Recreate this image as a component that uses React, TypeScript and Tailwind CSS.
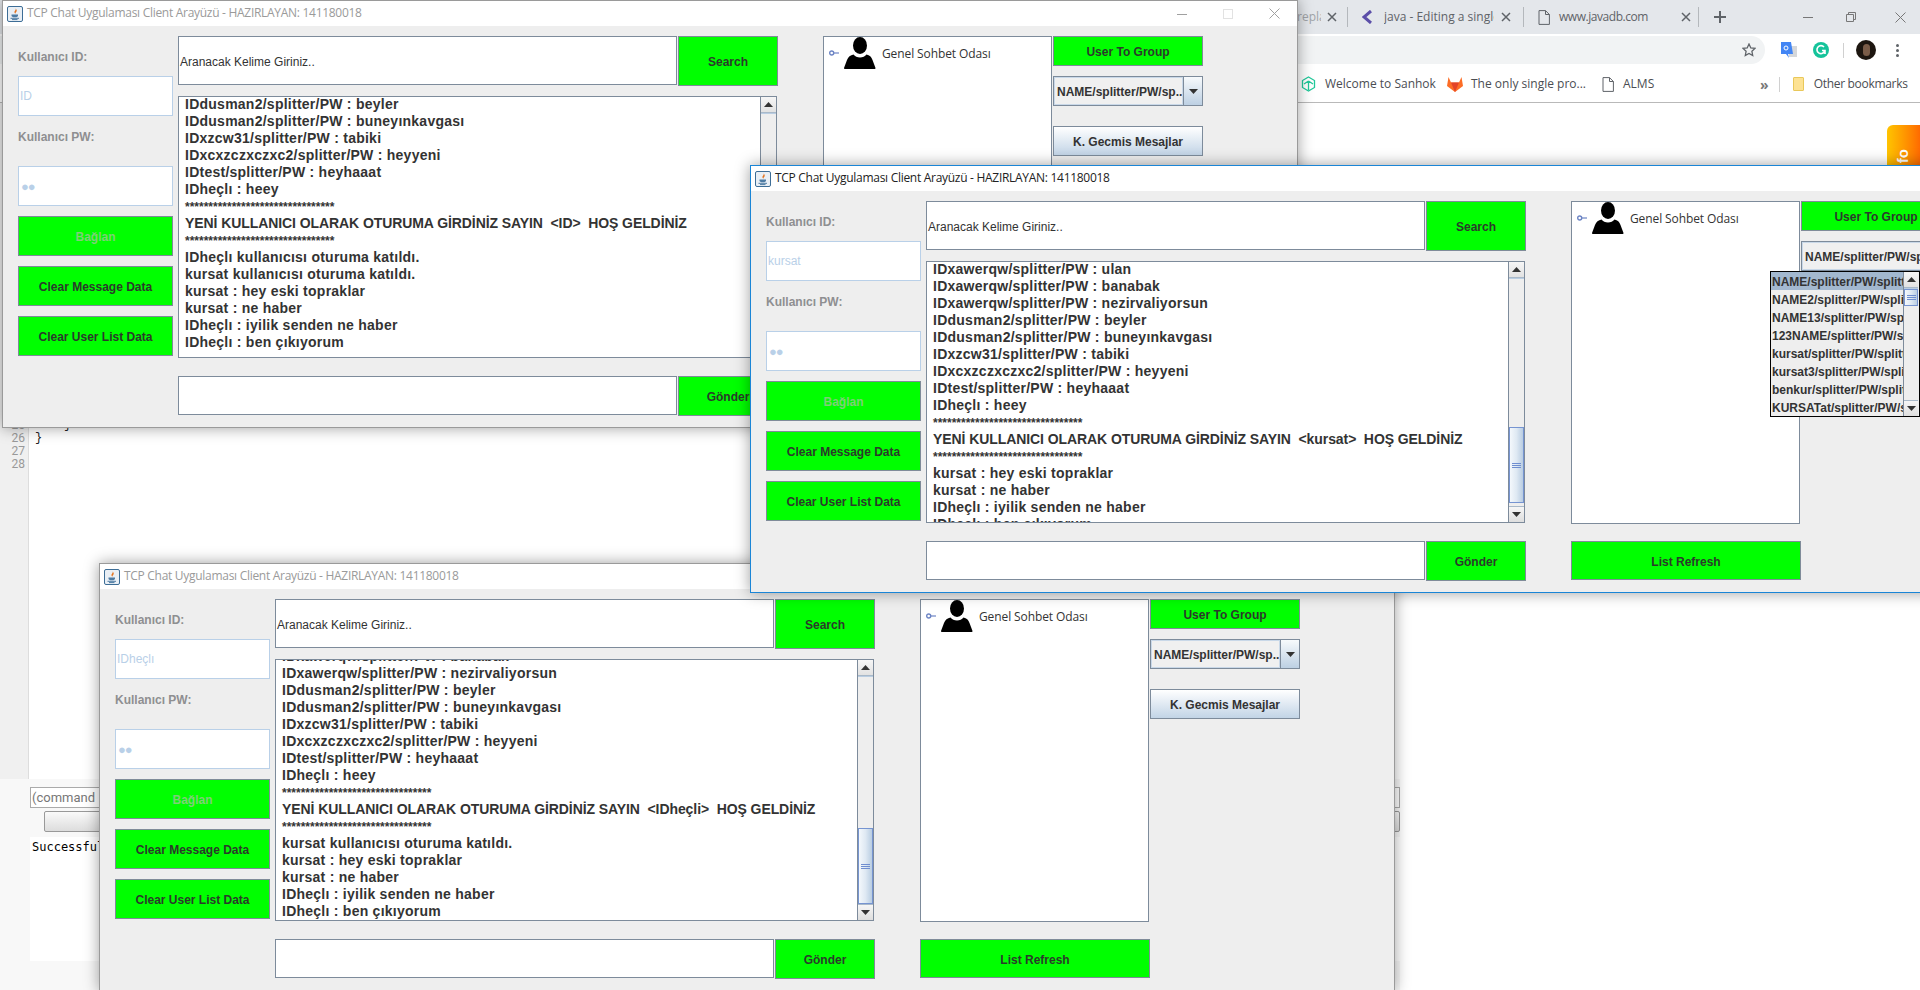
import React from "react";

const STARS = "********************************";
type Line = { k: "n" | "s" | "h"; t: string };
const n = (t: string): Line => ({ k: "n", t });
const s: Line = { k: "s", t: STARS };
const h = (name: string): Line => ({ k: "h", t: `YENİ KULLANICI OLARAK OTURUMA GİRDİNİZ SAYIN  <${name}>  HOŞ GELDİNİZ` });

const W1: Line[] = [
  n("IDdusman2/splitter/PW : beyler"), n("IDdusman2/splitter/PW : buneyınkavgası"), n("IDxzcw31/splitter/PW : tabiki"),
  n("IDxcxzczxczxc2/splitter/PW : heyyeni"), n("IDtest/splitter/PW : heyhaaat"), n("IDheçlı : heey"),
  s, h("ID"), s,
  n("IDheçlı kullanıcısı oturuma katıldı."), n("kursat kullanıcısı oturuma katıldı."), n("kursat : hey eski topraklar"),
  n("kursat : ne haber"), n("IDheçlı : iyilik senden ne haber"), n("IDheçlı : ben çıkıyorum"),
];
const W2: Line[] = [
  n("IDxawerqw/splitter/PW : ulan"), n("IDxawerqw/splitter/PW : banabak"), n("IDxawerqw/splitter/PW : nezirvaliyorsun"),
  n("IDdusman2/splitter/PW : beyler"), n("IDdusman2/splitter/PW : buneyınkavgası"), n("IDxzcw31/splitter/PW : tabiki"),
  n("IDxcxzczxczxc2/splitter/PW : heyyeni"), n("IDtest/splitter/PW : heyhaaat"), n("IDheçlı : heey"),
  s, h("kursat"), s,
  n("kursat : hey eski topraklar"), n("kursat : ne haber"), n("IDheçlı : iyilik senden ne haber"), n("IDheçlı : ben çıkıyorum"),
];
const W3: Line[] = [
  n("IDxawerqw/splitter/PW : banabak"), n("IDxawerqw/splitter/PW : nezirvaliyorsun"),
  n("IDdusman2/splitter/PW : beyler"), n("IDdusman2/splitter/PW : buneyınkavgası"), n("IDxzcw31/splitter/PW : tabiki"),
  n("IDxcxzczxczxc2/splitter/PW : heyyeni"), n("IDtest/splitter/PW : heyhaaat"), n("IDheçlı : heey"),
  s, h("IDheçli"), s,
  n("kursat kullanıcısı oturuma katıldı."), n("kursat : hey eski topraklar"), n("kursat : ne haber"),
  n("IDheçlı : iyilik senden ne haber"), n("IDheçlı : ben çıkıyorum"),
];

const POPUP = [
  "NAME/splitter/PW/splitter", "NAME2/splitter/PW/splitter", "NAME13/splitter/PW/splitter", "123NAME/splitter/PW/splitter",
  "kursat/splitter/PW/splitter", "kursat3/splitter/PW/splitter", "benkur/splitter/PW/splitter", "KURSATat/splitter/PW/splitter",
];

function JavaIcon() {
  return (
    <svg width="16" height="16" viewBox="0 0 16 16" className="shrink-0">
      <rect x="0.5" y="0.5" width="15" height="15" rx="1.5" fill="#e9eff5" stroke="#3d6d96" />
      <path d="M8.5 2.5c1 1.5-1.5 2.5-1 4 .2.6.6 1 1 1.2-.5-1.2 2-2.2 1-4-.2-.5-.5-.9-1-1.2z" fill="#e2711d" />
      <path d="M4.5 8.5h6.5v1.2c0 .9-1 1.5-3.2 1.5s-3.3-.6-3.3-1.5z" fill="#4d7ba3" />
      <path d="M3.5 12.3h8.5M5 13.6h5.5" stroke="#4d7ba3" strokeWidth="1" />
    </svg>
  );
}

function TitleControls({ active }: { active: boolean }) {
  const c = active ? "#111111" : "#a0a0a0";
  return (
    <div className="flex h-full shrink-0">
      <div className="flex h-full w-[46px] items-center justify-center">
        <svg width="10" height="10" viewBox="0 0 10 10"><path d="M0 5.5h10" stroke={c} /></svg>
      </div>
      <div className="flex h-full w-[46px] items-center justify-center">
        <svg width="10" height="10" viewBox="0 0 10 10"><rect x="0.5" y="0.5" width="9" height="9" fill="none" stroke="#e2e2e2" /></svg>
      </div>
      <div className="flex h-full w-[46px] items-center justify-center">
        <svg width="11" height="11" viewBox="0 0 11 11"><path d="M0.5 0.5l10 10M10.5 0.5l-10 10" stroke={c} /></svg>
      </div>
    </div>
  );
}

function Arrow({ up }: { up?: boolean }) {
  return (
    <svg width="9" height="5" viewBox="0 0 9 5">
      <path d={up ? "M4.5 0L9 5H0z" : "M0 0h9L4.5 5z"} fill="#333333" />
    </svg>
  );
}

function Scrollbar({ thumb, thumbH, w }: { thumb: string; thumbH: string; w: string }) {
  return (
    <div className={`flex h-full shrink-0 flex-col border-l border-[#7d8b9b] bg-[#eeeeee] ${w}`}>
      <div className="flex h-[16px] shrink-0 items-center justify-center border-b border-[#a9b9c9] bg-gradient-to-b from-[#f6f6f6] to-[#e2e2e2]">
        <Arrow up />
      </div>
      <div className="min-h-0 flex-1 border-t border-[#b9cde2]">
        <div className={`flex flex-col items-center justify-center gap-[1px] border-y border-x border-[#7694d1] bg-gradient-to-r from-[#f4f8fc] via-[#dfe9f3] to-[#b9cde2] ${thumb} ${thumbH}`}>
          <div className="h-px w-[9px] bg-[#6f8ed0]" />
          <div className="h-px w-[9px] bg-[#6f8ed0]" />
          <div className="h-px w-[9px] bg-[#6f8ed0]" />
        </div>
      </div>
      <div className="flex h-[16px] shrink-0 items-center justify-center border-t border-[#a9b9c9] bg-gradient-to-b from-[#f6f6f6] to-[#dedede]">
        <Arrow />
      </div>
    </div>
  );
}

function GreenButton({ label, cls, disabled }: { label: string; cls: string; disabled?: boolean }) {
  return (
    <div className={`flex items-center justify-center border border-[#7f8b99] bg-[#00ff00] pt-[2px] text-[12px] font-bold ${disabled ? "text-[#7fcf78]" : "text-[#2b3a2b]"} ${cls}`}>
      {label}
    </div>
  );
}

function Person() {
  return (
    <svg width="32" height="32" viewBox="0 0 32 32" className="shrink-0">
      <ellipse cx="16" cy="8.5" rx="7" ry="8.5" fill="#000" />
      <path d="M9.5 17.5c1.5 1.8 3.8 3 6.5 3s5-1.2 6.500-3c3 .8 5 2.300 6 5.500l3 8c.2.6-.2 1-.8 1H.8c-.6 0-1-.4-.8-1l3-8c1-3.200 3.500-4.700 6.500-5.500z" fill="#000" />
    </svg>
  );
}

function Key() {
  return (
    <svg width="10" height="6" viewBox="0 0 10 6" className="shrink-0">
      <circle cx="2.7" cy="3" r="2" fill="none" stroke="#6c84c4" strokeWidth="1.4" />
      <path d="M5 3h5" stroke="#6c84c4" strokeWidth="1.2" />
    </svg>
  );
}

type WinProps = {
  pos: string;
  active?: boolean;
  lines: Line[];
  scroll: string;
  thumb: string;
  thumbH: string;
  id: string;
  popup?: boolean;
};

function Win({ pos, active, lines, scroll, thumb, thumbH, id, popup }: WinProps) {
  return (
    <div
      className={`absolute flex h-[428px] w-[1296px] flex-col border bg-[#eeeeee] font-['Liberation_Sans',Arial,sans-serif] shadow-[0_0_14px_rgba(0,0,0,0.38)] ${active ? "border-[#1a85d6]" : "border-[#9a9a9a]"} ${pos}`}
    >
      <div className="flex h-[25px] shrink-0 items-center bg-white">
        <div className="ml-[4px] flex min-w-0 flex-1 items-center gap-[4px]">
          <JavaIcon />
          <span className={`-mt-[2px] font-['Open_Sans',sans-serif] text-[12px] tracking-[-0.29px] whitespace-nowrap ${active ? "text-[#222222]" : "text-[#9a9a9a]"}`}>
            TCP Chat Uygulaması Client Arayüzü - HAZIRLAYAN: 141180018
          </span>
        </div>
        <TitleControls active={!!active} />
      </div>

      <div className="flex flex-1 pt-[10px] pl-[15px]">
        {/* left column */}
        <div className="flex w-[155px] shrink-0 flex-col">
          <div className="flex h-[40px] items-center pt-[2px] text-[12px] font-bold text-[#8e8f91]">Kullanıcı ID:</div>
          <div className="flex h-[40px] items-center border border-[#b9d0e8] bg-white pl-[1px] text-[12px] text-[#b9d0e8]">{id}</div>
          <div className="mb-[8px] flex h-[42px] items-center text-[12px] font-bold text-[#8e8f91]">Kullanıcı PW:</div>
          <div className="flex h-[40px] items-center border border-[#b9d0e8] bg-white pt-[2px] pl-[2px] text-[13px] tracking-[-1px] text-[#b9d0e8]">●●</div>
          <GreenButton label="Bağlan" disabled cls="mt-[10px] h-[40px]" />
          <GreenButton label="Clear Message Data" cls="mt-[10px] h-[40px]" />
          <GreenButton label="Clear User List Data" cls="mt-[10px] h-[40px]" />
        </div>

        {/* centre column */}
        <div className="ml-[5px] flex w-[600px] shrink-0 flex-col">
          <div className="flex h-[50px] gap-[1px]">
            <div className="flex h-[49px] w-[499px] items-center border border-[#7d8b9b] bg-white pt-[2px] pl-[1px] text-[12px] text-[#333333]">Aranacak Kelime Giriniz..</div>
            <GreenButton label="Search" cls="h-[50px] w-[100px]" />
          </div>
          <div className="mt-[10px] flex h-[262px] w-[599px] overflow-hidden border border-[#7d8b9b] bg-white">
            <div className="min-w-0 flex-1 overflow-hidden pl-[6px] whitespace-pre text-[#333333]">
              <div className={scroll}>
                {lines.map((l, i) =>
                  l.k === "s" ? (
                    <div key={i} className="mb-[6px] h-[11px] pt-[4px] text-[12px] leading-[11px] font-bold">{l.t}</div>
                  ) : (
                    <div key={i} className={`h-[17px] text-[14px] leading-[17px] font-bold ${l.k === "h" ? "tracking-[-0.08px]" : "tracking-[0.25px]"}`}>{l.t}</div>
                  ),
                )}
              </div>
            </div>
            <Scrollbar thumb={thumb} thumbH={thumbH} w="w-[16px]" />
          </div>
          <div className="mt-[18px] flex gap-[1px]">
            <div className="h-[39px] w-[499px] border border-[#7d8b9b] bg-white" />
            <GreenButton label="Gönder" cls="h-[40px] w-[100px]" />
          </div>
        </div>

        {/* tree column */}
        <div className="ml-[45px] flex w-[230px] shrink-0 flex-col">
          <div className="h-[323px] w-[229px] border border-[#7d8b9b] bg-white">
            <div className="flex items-center pl-[5px] text-[12px] text-[#333333]">
              <Key />
              <span className="ml-[5px]"><Person /></span>
              <span className="ml-[6px] pt-[2px] font-['Open_Sans',sans-serif] tracking-[-0.1px] whitespace-nowrap">Genel Sohbet Odası</span>
            </div>
          </div>
          <GreenButton label="List Refresh" cls="mt-[17px] h-[39px] w-[230px]" />
        </div>

        {/* right column */}
        <div className="flex w-[150px] shrink-0 flex-col">
          <GreenButton label="User To Group" cls="h-[30px]" />
          <div className="mt-[10px] flex h-[30px] border border-[#7d8b9b] text-[12px] font-bold text-[#333333]">
            <div className="flex min-w-0 flex-1 items-center overflow-hidden border border-[#c9d8e8] bg-[#f0f0f0] pt-[2px] pl-[2px] whitespace-nowrap">NAME/splitter/PW/sp...</div>
            <div className="flex w-[19px] shrink-0 items-center justify-center border-l border-[#7d8b9b] bg-gradient-to-b from-[#f7fafc] to-[#bdd0e3]">
              <Arrow />
            </div>
          </div>
          <div className="mt-[20px] flex h-[30px] items-center justify-center border border-[#7d8b9b] bg-gradient-to-b from-[#ffffff] to-[#c2d4e6] pt-[2px] text-[12px] font-bold text-[#333333]">K. Gecmis Mesajlar</div>
        </div>
      </div>

      {popup && (
        <div className="absolute top-[105px] left-[1019px] flex h-[146px] w-[150px] border border-black bg-[#eeeeee] font-bold text-[#333333]">
          <div className="w-[132px] shrink-0 overflow-hidden">
            {POPUP.map((p, i) => (
              <div key={p} className={`h-[18px] pl-[1px] text-[12px] leading-[20px] whitespace-nowrap ${i === 0 ? "bg-[#a3b8cf]" : ""}`}>{p}</div>
            ))}
          </div>
          <Scrollbar thumb="mt-0" thumbH="h-[17px]" w="w-[15px]" />
        </div>
      )}
    </div>
  );
}

function TabX() {
  return (
    <svg width="10" height="10" viewBox="0 0 10 10" className="shrink-0"><path d="M1 1l8 8M9 1L1 9" stroke="#5f6368" strokeWidth="1.5" /></svg>
  );
}

function FileIcon() {
  return (
    <svg width="12" height="15" viewBox="0 0 12 15" className="shrink-0"><path d="M1 .6h6.500L11.400 4.500V14.400H1zM7.500 .6V4.500H11.400" fill="none" stroke="#5f6368" /></svg>
  );
}

function Chrome() {
  return (
    <div className="font-['Open_Sans',sans-serif] text-[12px] text-[#5f6368]">
      {/* tab strip */}
      <div className="flex h-[34px] items-center bg-[#e4e7eb] pl-[1297px]">
        <div className="flex w-[50px] items-center">
          <span className="w-[24px] overflow-hidden whitespace-nowrap text-[#a0a4a8]">replace</span>
          <span className="ml-[6px]"><TabX /></span>
        </div>
        <div className="h-[20px] w-px bg-[#b4b8bc]" />
        <div className="flex w-[175px] items-center">
          <svg width="12" height="14" viewBox="0 0 12 14" className="ml-[14px] shrink-0"><path d="M9 1L2 7l7 6" fill="none" stroke="#5b4ea8" strokeWidth="3" /></svg>
          <span className="ml-[10px] w-[110px] overflow-hidden whitespace-nowrap">java - Editing a single</span>
          <span className="ml-[7px]"><TabX /></span>
        </div>
        <div className="h-[20px] w-px bg-[#b4b8bc]" />
        <div className="flex w-[174px] items-center">
          <span className="ml-[14px]"><FileIcon /></span>
          <span className="ml-[9px] w-[122px] tracking-[-0.45px] whitespace-nowrap">www.javadb.com</span>
          <span className="ml-[0px]"><TabX /></span>
        </div>
        <div className="h-[20px] w-px bg-[#b4b8bc]" />
        <svg width="12" height="12" viewBox="0 0 12 12" className="ml-[15px] shrink-0"><path d="M6 0v12M0 6h12" stroke="#5f6368" strokeWidth="2" /></svg>
        <svg width="10" height="10" viewBox="0 0 10 10" className="ml-[77px] shrink-0"><path d="M0 5.500h10" stroke="#777" /></svg>
        <svg width="10" height="10" viewBox="0 0 10 10" className="ml-[33px] shrink-0"><path d="M.5 2.500h7v7h-7zM2.500 2.500v-2h7v7h-2" fill="none" stroke="#777" /></svg>
        <svg width="11" height="11" viewBox="0 0 11 11" className="ml-[39px] shrink-0"><path d="M.5.5l10 10M10.500.5l-10 10" stroke="#777" /></svg>
      </div>
      {/* toolbar */}
      <div className="flex h-[32px] items-center bg-white">
        <div className="flex h-[28px] w-[1765px] shrink-0 items-center justify-end rounded-r-full bg-[#f1f3f4] pr-[9px]">
          <svg width="14" height="14" viewBox="0 0 14 14"><path d="M7 1l1.800 3.900 4.200.500-3.100 2.900.8 4.200L7 10.400l-3.700 2.100.8-4.200L1 5.400l4.200-.5z" fill="none" stroke="#5f6368" strokeWidth="1.300" /></svg>
        </div>
        <svg width="16" height="16" viewBox="0 0 16 16" className="ml-[16px] shrink-0">
          <path d="M8 4h8v11H8z" fill="#d5d7da" />
          <path d="M0 0h10l2 12H7l1 4-3-4H0z" fill="#4285f4" />
          <circle cx="5" cy="6" r="2" fill="none" stroke="#fff" />
        </svg>
        <svg width="16" height="16" viewBox="0 0 16 16" className="ml-[16px] shrink-0">
          <circle cx="8" cy="8" r="8" fill="#15c39a" />
          <path d="M11.500 9.500A4 4 0 1 1 11 5M9 8.500h3V12" fill="none" stroke="#fff" strokeWidth="1.600" />
        </svg>
        <div className="ml-[14px] h-[15px] w-px bg-[#d0d0d0]" />
        <div className="ml-[12px] flex h-[20px] w-[20px] shrink-0 items-center justify-center rounded-full bg-[#1d1610]">
          <div className="h-[12px] w-[7px] rounded-full bg-[#7a5c48]" />
        </div>
        <div className="ml-[20px] flex flex-col gap-[2px]">
          <div className="h-[3px] w-[3px] rounded-full bg-[#5f6368]" />
          <div className="h-[3px] w-[3px] rounded-full bg-[#5f6368]" />
          <div className="h-[3px] w-[3px] rounded-full bg-[#5f6368]" />
        </div>
      </div>
      {/* bookmarks */}
      <div className="flex h-[37px] items-center border-b border-[#b9b9b9] bg-white pl-[1301px] text-[#4a4d52]">
        <svg width="15" height="16" viewBox="0 0 15 16" className="shrink-0"><path d="M7.500 1l6 3.500v7l-6 3.500-6-3.500v-7zM7.500 5L3 8M7.500 5L12 8M7.500 5v9" fill="none" stroke="#21c99a" strokeWidth="1.300" /></svg>
        <span className="ml-[9px] w-[106px] whitespace-nowrap">Welcome to Sanhok</span>
        <svg width="16" height="15" viewBox="0 0 16 15" className="ml-[16px] shrink-0">
          <path d="M8 15L0 9l1.500-9L4 5.500h8L14.500 0 16 9z" fill="#fc6d26" />
          <path d="M8 15L4 5.500h8z" fill="#e24329" />
        </svg>
        <span className="ml-[8px] w-[112px] whitespace-nowrap">The only single pro...</span>
        <span className="ml-[19px]"><FileIcon /></span>
        <span className="ml-[9px] w-[137px] whitespace-nowrap">ALMS</span>
        <span className="text-[14px] font-bold text-[#777]">»</span>
        <div className="ml-[10px] h-[15px] w-px bg-[#d0d0d0]" />
        <div className="ml-[13px] h-[14px] w-[11px] shrink-0 rounded-[1px] border border-[#e9c85a] bg-[#fde293]" />
        <span className="ml-[10px] tracking-[-0.3px] whitespace-nowrap">Other bookmarks</span>
      </div>
    </div>
  );
}

export default function App() {
  return (
    <div className="relative h-[990px] w-[1920px] overflow-hidden bg-white">
      <Chrome />

      {/* IDE area under the windows */}
      <div className="flex h-[676px]">
        <div className="flex w-[29px] shrink-0 flex-col items-end border-r border-[#dddddd] bg-[#f0f0f0] pt-[316px] pr-[3px] font-['Roboto',sans-serif] text-[12px] leading-[13px] text-[#999999]">
          <div>25</div>
          <div>26</div>
          <div>27</div>
          <div>28</div>
        </div>
        <div className="flex-1 pt-[316px] pl-[6px] font-['Liberation_Mono',monospace] text-[12px] leading-[13px] text-[#222222]">
          <div className="pl-[29px]">{"}"}</div>
          <div>{"}"}</div>
        </div>
        <div className="flex w-[33px] shrink-0 justify-end pt-[22px]">
          <div className="flex h-[60px] w-[33px] items-end justify-center rounded-tl-[6px] bg-gradient-to-r from-[#ffc400] to-[#ff6a00] pb-[18px] text-[15px] font-bold text-white font-['Liberation_Sans',sans-serif]">
            <span className="-rotate-90">fo</span>
          </div>
        </div>
      </div>

      <div className="h-[211px] w-[1400px] bg-[#f8f8f8] pt-[8px] pl-[30px]">
        <div className="flex h-[21px] items-center border border-[#aaaaaa] bg-white pl-[1px] font-['Roboto',sans-serif] text-[13px] text-[#777777]">(command</div>
        <div className="mt-[3px] ml-[14px] h-[21px] rounded-[2px] border border-[#999999] bg-gradient-to-b from-[#fafafa] to-[#dddddd]" />
        <div className="mt-[5px] h-[124px] bg-white pt-[2px] pl-[2px] font-['DejaVu_Sans_Mono',monospace] text-[12px] leading-[16px] text-black">Successful</div>
      </div>

      <Win pos="left-[2px] top-0" lines={W1} id="ID" scroll="-mt-[1px]" thumb="mt-[148px]" thumbH="h-[76px]" />
      <Win pos="left-[99px] top-[563px]" lines={W3} id="IDheçlı" scroll="-mt-[12px]" thumb="mt-[151px]" thumbH="h-[76px]" />
      <Win pos="left-[750px] top-[165px]" active lines={W2} id="kursat" scroll="-mt-[1px]" thumb="mt-[148px]" thumbH="h-[76px]" popup />
    </div>
  );
}
